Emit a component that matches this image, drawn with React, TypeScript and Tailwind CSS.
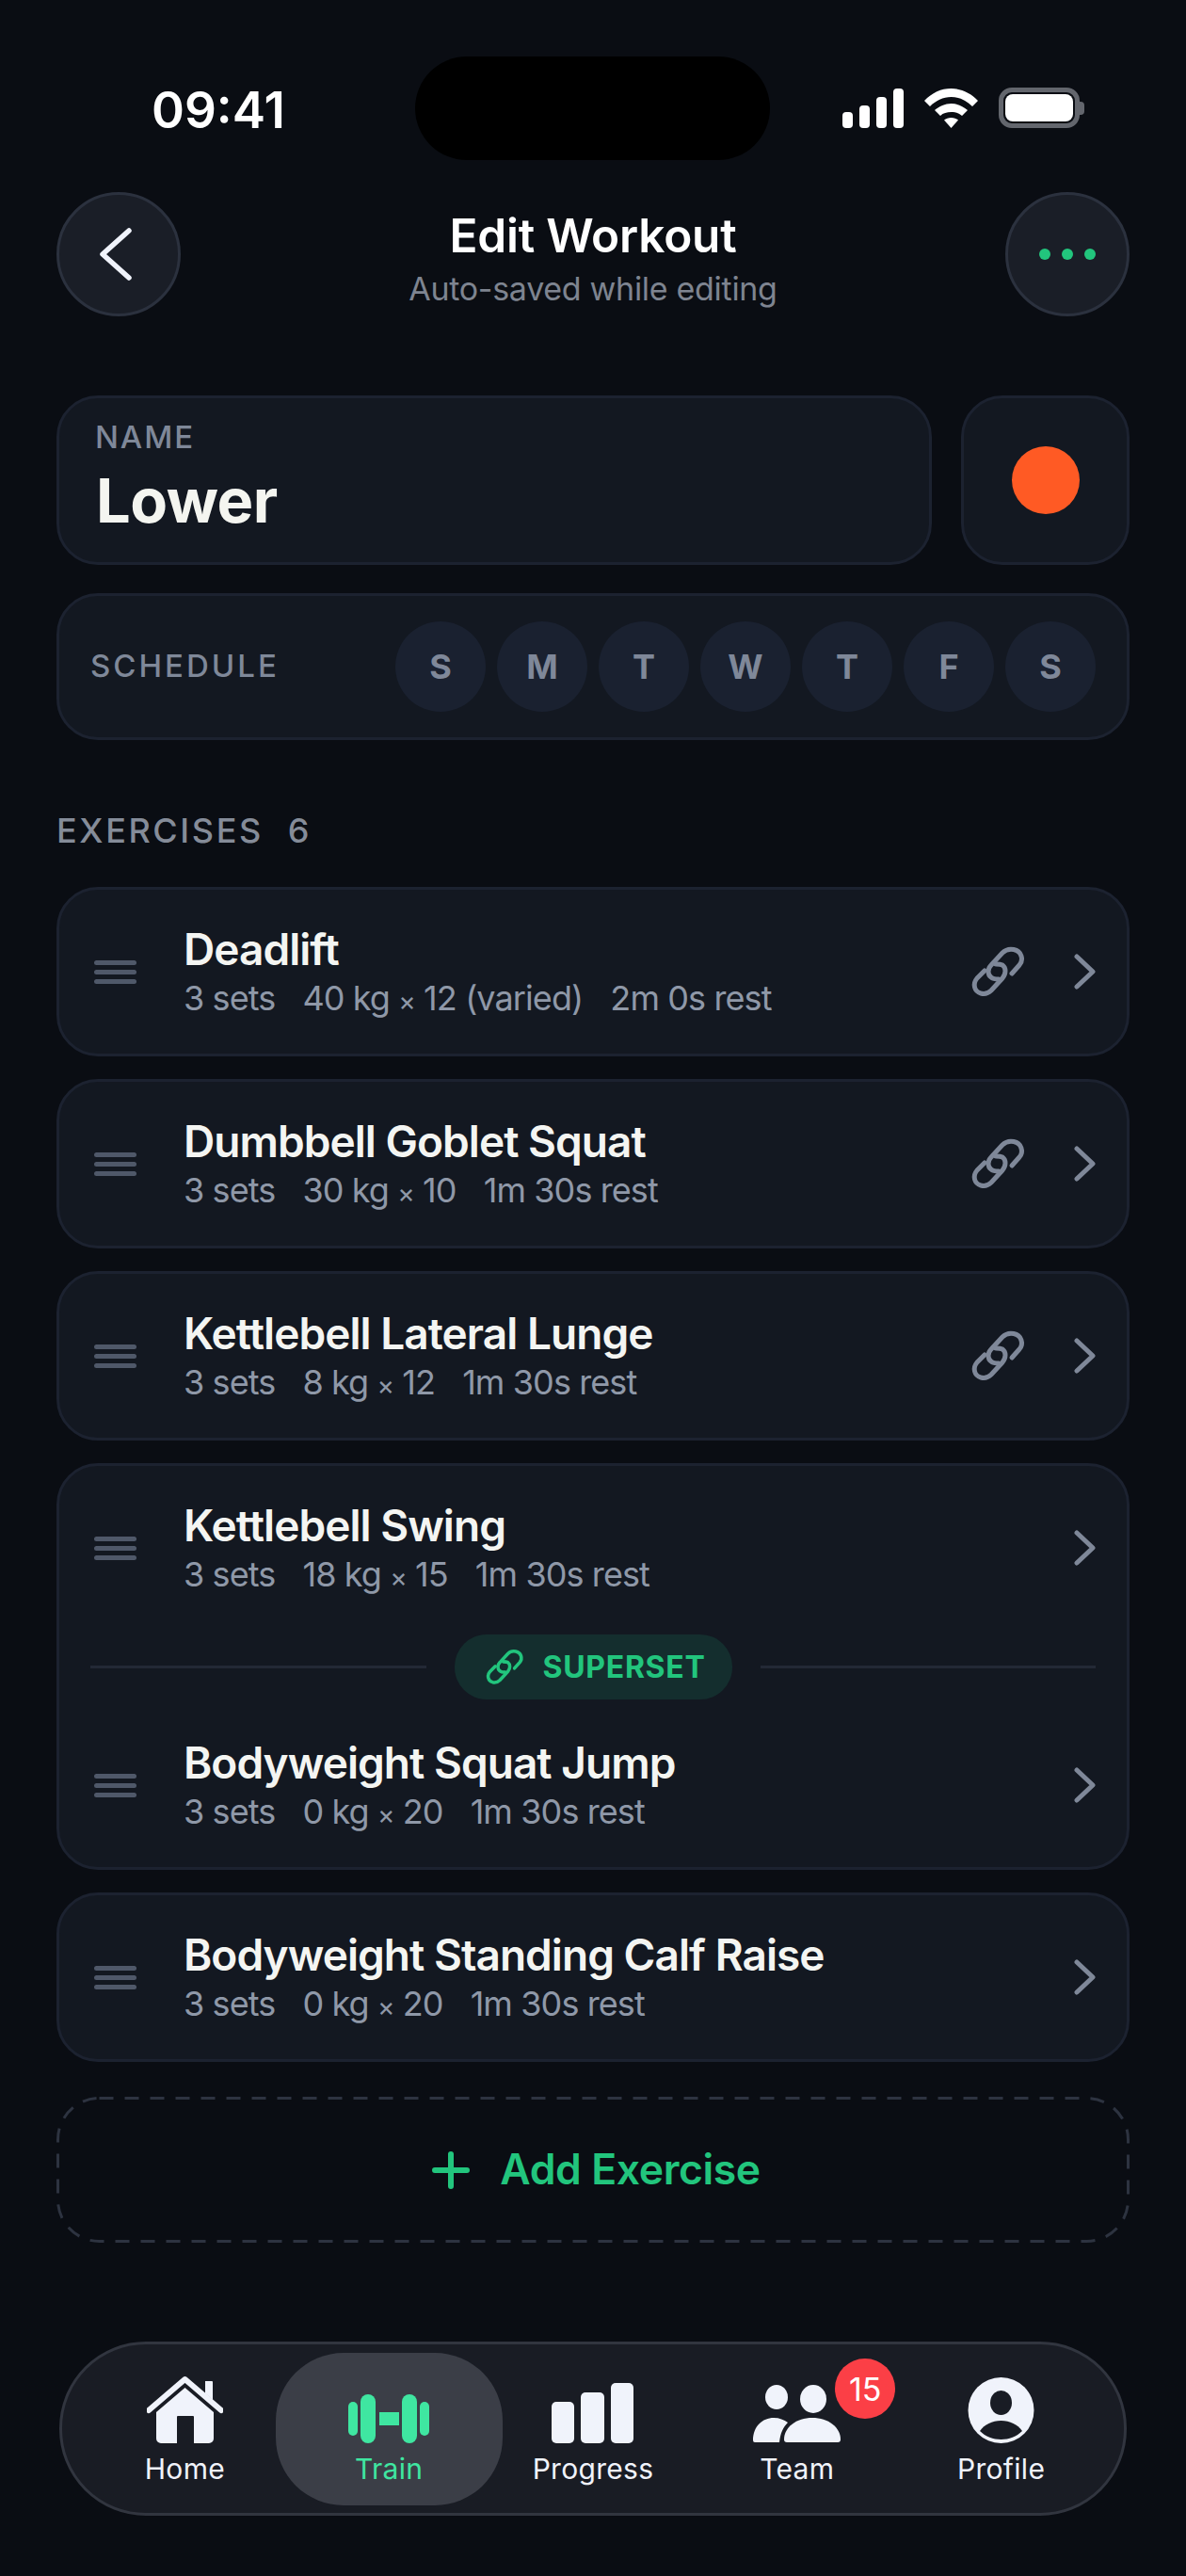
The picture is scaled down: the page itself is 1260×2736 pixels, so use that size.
const sans = "font-['Inter','Liberation_Sans',sans-serif]";

const days = ["S", "M", "T", "W", "T", "F", "S"];

const Chevron = () => (
  <svg viewBox="0 0 23 38" className="h-[38px] w-[23px] text-[#7f8899]" fill="none" stroke="currentColor" strokeWidth="5" strokeLinecap="round" strokeLinejoin="round">
    <path d="M3 3 L20 19 L3 35" />
  </svg>
);

const LinkIcon = ({ className }: { className: string }) => (
  <svg viewBox="0 0 70 64" className={className} fill="none" stroke="currentColor" strokeWidth="5" strokeLinecap="round" strokeLinejoin="round">
    <path d="M50 34 L58 25 C63 19 60 10 52 8.500 C47 7.500 43 9 40 12 L28 25 C24 29 24 35 28 38 C30 40 33 40 36 40" />
    <path d="M21 31 L13 39 C8 45 10 53 17 55 C21 56 25 55 28 52 L40 39 C44 34 44 28 40 25 C38 24 36 24 33 24" />
  </svg>
);

const Load = ({ value }: { value: string }) => {
  const [left, right] = value.split("×");
  return (
    <span>
      {left}
      <span className="text-[28px]">×</span>
      {right}
    </span>
  );
};

const Row = ({ name, sets, load, rest, linked, className = "" }: { name: string; sets: string; load: string; rest: string; linked?: boolean; className?: string }) => (
  <div className={`flex items-center pl-[37px] pr-[33px] ${className}`}>
    <div className="flex w-[45px] flex-col gap-[5px]">
      <div className="h-[5px] rounded-full bg-[#4f5869]" />
      <div className="h-[5px] rounded-full bg-[#4f5869]" />
      <div className="h-[5px] rounded-full bg-[#4f5869]" />
    </div>
    <div className="ml-[50px] flex-1 pt-[2px]">
      <div className="text-[46px] font-semibold leading-[56px] tracking-[-0.95px] text-[#f4f5f2]">{name}</div>
      <div className="mt-[1px] flex gap-[29px] text-[36px] leading-[46px] tracking-[-0.9px] text-[#8f98a8]">
        <span>{sets}</span>
        <Load value={load} />
        <span>{rest}</span>
      </div>
    </div>
    {linked && <LinkIcon className="mr-[46px] h-[64px] w-[70px] text-[#7f8899]" />}
    <Chevron />
  </div>
);

const Card = ({ children }: { children: React.ReactNode }) => (
  <div className="rounded-[44px] border-[3px] border-[#1c2230] bg-[#131821]">{children}</div>
);

const HomeIcon = () => (
  <svg viewBox="0 0 81 72" className="h-[72px] w-[81px]" fill="#f0f3fb">
    <path d="M62 6 h7 a1 1 0 0 1 1 1 v19 l-8 -7 z" />
    <path d="M2 37 L40.5 4 L79 37" fill="none" stroke="#f0f3fb" strokeWidth="6" strokeLinecap="round" strokeLinejoin="round" />
    <path fillRule="evenodd" d="M40.5 13 L71 39 V67 a5 5 0 0 1 -5 5 H15 a5 5 0 0 1 -5 -5 V39 Z M32 44 V72 H50 V44 a1 1 0 0 0 -1 -1 H33 a1 1 0 0 0 -1 1 Z" />
  </svg>
);

const DumbbellIcon = () => (
  <svg viewBox="0 0 86 52" className="h-[52px] w-[86px]" fill="#3fe6a1">
    <rect x="0" y="8" width="10" height="36" rx="5" />
    <rect x="13" y="0" width="16" height="52" rx="8" />
    <rect x="33" y="19" width="21" height="14" />
    <rect x="57" y="0" width="16" height="52" rx="8" />
    <rect x="76" y="8" width="10" height="36" rx="5" />
  </svg>
);

const BarsIcon = () => (
  <svg viewBox="0 0 87 64" className="h-[64px] w-[87px]" fill="#f0f3fb">
    <rect x="0" y="20" width="24" height="44" rx="5" />
    <rect x="31" y="10" width="25" height="54" rx="5" />
    <rect x="63" y="0" width="24" height="64" rx="5" />
  </svg>
);

const TeamIcon = () => (
  <svg viewBox="0 0 93 62" className="h-[62px] w-[93px]" fill="#f0f3fb">
    <ellipse cx="25" cy="13" rx="12" ry="13" />
    <ellipse cx="64" cy="15" rx="14" ry="15" />
    <path d="M0 59 C0 44 10 35 22 35 C28 35 33 37 37 40 C32 45 29 51 28 61 H2 a2 2 0 0 1 -2 -2 Z" />
    <path d="M36 61 a3 3 0 0 1 -3 -3 C33 45 46 35 63 35 C80 35 93 45 93 58 a3 3 0 0 1 -3 3 Z" />
  </svg>
);

const ProfileIcon = () => (
  <svg viewBox="0 0 71 70" className="h-[70px] w-[71px]">
    <circle cx="35.5" cy="35" r="35" fill="#f0f3fb" />
    <ellipse cx="35.5" cy="27" rx="11.5" ry="13" fill="#191c24" />
    <path d="M13 57 C18 50 26 46 35.5 46 C45 46 53 50 58 57 C52 63 44 66 35.5 66 C27 66 19 63 13 57 Z" fill="#191c24" />
  </svg>
);

const NavItem = ({ label, active, children }: { label: string; active?: boolean; children: React.ReactNode }) => (
  <div className="relative flex h-full flex-1 flex-col items-center">
    {active && <div className="absolute -inset-x-3 top-[9px] bottom-[8px] rounded-[72px] bg-[#3b3e47]" />}
    <div className="relative flex h-[110px] items-end pb-[5px]">{children}</div>
    <div className={`relative mt-[3px] text-[30px] font-normal leading-[38px] tracking-[0.3px] ${active ? "text-[#3fe6a1]" : "text-[#f0f3fb]"}`}>{label}</div>
  </div>
);

export default function App() {
  return (
    <div className={`h-[2736px] w-[1260px] overflow-hidden bg-[#0a0d13] ${sans}`}>
      {/* status bar */}
      <div className="mt-[60px] flex h-[110px] items-start pt-[33px]">
        <div className="w-[441px] pl-[161px] text-[53px] font-semibold leading-[48px] text-white">09:41</div>
        <div className="-mt-[33px] h-[110px] w-[377px] rounded-[55px] bg-black" />
        <div className="ml-[77px] flex items-center gap-[22px]">
          <svg viewBox="0 0 65 42" className="h-[42px] w-[65px]" fill="#fff">
            <rect x="0" y="25" width="11" height="17" rx="4" />
            <rect x="18" y="18" width="11" height="24" rx="4" />
            <rect x="36" y="9" width="11" height="33" rx="4" />
            <rect x="54" y="0" width="11" height="42" rx="4" />
          </svg>
          <svg viewBox="0 0 57 42" className="h-[42px] w-[57px]" fill="#fff">
            <path d="M28.5 0 C39 0 49 4.500 57 13 L51 19 C45 13 37 9 28.500 9 C20 9 12 13 6 19 L0 13 C8 4.500 18 0 28.500 0 Z" />
            <path d="M28.5 16 C35 16 41 19 46 23 L40 29 C37 26 33 25 28.5 25 C24 25 20 26 17 29 L11 23 C16 19 22 16 28.5 16 Z" />
            <path d="M28.500 31 C31.500 31 34 32 36 33.500 L28.500 42 L21 33.500 C23 32 25.500 31 28.500 31 Z" />
          </svg>
          <div className="flex items-center">
            <div className="h-[43px] w-[86px] rounded-[14px] border-[5px] border-[#63666d] p-[2px]">
              <div className="h-full rounded-[8px] bg-white" />
            </div>
            <div className="h-[14px] w-[5px] rounded-r-[4px] bg-[#63666d]" />
          </div>
        </div>
      </div>

      {/* header */}
      <div className="mt-[34px] flex h-[132px] items-center justify-between px-[60px]">
        <div className="flex h-[132px] w-[132px] items-center justify-center rounded-full border-[3px] border-[#2b313e] bg-[#1a1e27]">
          <svg viewBox="0 0 34 56" className="-ml-[6px] h-[56px] w-[34px] text-[#f0f3fb]" fill="none" stroke="currentColor" strokeWidth="5.5" strokeLinecap="round" strokeLinejoin="round">
            <path d="M31 3 L3 28 L31 53" />
          </svg>
        </div>
        <div className="pt-[10px] text-center">
          <div className="text-[49.5px] font-semibold leading-[56px] tracking-[-0.2px] text-white">Edit Workout</div>
          <div className="mt-[7px] text-[34px] leading-[44px] tracking-[-0.3px] text-[#7e8490]">Auto-saved while editing</div>
        </div>
        <div className="flex h-[132px] w-[132px] items-center justify-center gap-[12px] rounded-full border-[3px] border-[#2b313e] bg-[#1a1e27]">
          <div className="h-[12px] w-[12px] rounded-full bg-[#22c57d]" />
          <div className="h-[12px] w-[12px] rounded-full bg-[#22c57d]" />
          <div className="h-[12px] w-[12px] rounded-full bg-[#22c57d]" />
        </div>
      </div>

      <div className="mt-[84px] px-[60px]">
        {/* name + colour */}
        <div className="flex gap-[31px]">
          <div className="h-[180px] flex-1 rounded-[44px] border-[3px] border-[#1c2230] bg-[#131821] pl-[38px] pt-[21px]">
            <div className="text-[33px] font-medium leading-[40px] tracking-[1.9px] text-[#7f8899]">NAME</div>
            <div className="ml-[1px] mt-[12px] text-[65px] font-bold leading-[72px] tracking-[-0.5px] text-[#f4f5f0]">Lower</div>
          </div>
          <div className="flex h-[180px] w-[179px] items-center justify-center rounded-[44px] border-[3px] border-[#1c2230] bg-[#131821]">
            <div className="h-[72px] w-[72px] rounded-full bg-[#ff5a24]" />
          </div>
        </div>

        {/* schedule */}
        <div className="mt-[30px] flex h-[156px] items-center justify-between rounded-[44px] border-[3px] border-[#1c2230] bg-[#131821] pl-[33px] pr-[33px]">
          <div className="text-[33px] font-medium tracking-[3px] text-[#7f8899]">SCHEDULE</div>
          <div className="flex gap-[12px]">
            {days.map((d, i) => (
              <div key={i} className="flex h-[96px] w-[96px] items-center justify-center rounded-full bg-[#1a2130] text-[36px] font-bold text-[#7f8899]">
                {d}
              </div>
            ))}
          </div>
        </div>

        {/* exercises */}
        <div className="mt-[76px] flex gap-[26px] text-[36px] font-medium leading-[40px] tracking-[2.6px] text-[#858c99]">
          <span>EXERCISES</span>
          <span>6</span>
        </div>

        <div className="mt-[40px] flex flex-col gap-[24px]">
          <Card><Row className="h-[174px]" name="Deadlift" sets="3 sets" load="40 kg × 12 (varied)" rest="2m 0s rest" linked /></Card>
          <Card><Row className="h-[174px]" name="Dumbbell Goblet Squat" sets="3 sets" load="30 kg × 10" rest="1m 30s rest" linked /></Card>
          <Card><Row className="h-[174px]" name="Kettlebell Lateral Lunge" sets="3 sets" load="8 kg × 12" rest="1m 30s rest" linked /></Card>
          <Card>
            <Row className="h-[174px]" name="Kettlebell Swing" sets="3 sets" load="18 kg × 15" rest="1m 30s rest" />
            <div className="mt-[5px] flex items-center gap-[30px] px-[33px]">
              <div className="h-[3px] flex-1 bg-[#232936]" />
              <div className="flex h-[69px] w-[295px] items-center justify-center gap-[16px] rounded-[34px] bg-[#142e2e]">
                <LinkIcon className="h-[45px] w-[50px] text-[#22c57d]" />
                <span className="text-[32px] font-bold tracking-[0.7px] text-[#22c57d]">SUPERSET</span>
              </div>
              <div className="h-[3px] flex-1 bg-[#232936]" />
            </div>
            <Row className="h-[178px] pt-[4px]" name="Bodyweight Squat Jump" sets="3 sets" load="0 kg × 20" rest="1m 30s rest" />
          </Card>
          <Card><Row className="h-[174px]" name="Bodyweight Standing Calf Raise" sets="3 sets" load="0 kg × 20" rest="1m 30s rest" /></Card>
        </div>

        {/* add */}
        <div className="relative mt-[37px] flex h-[155px] items-center justify-center gap-[32px] pl-[7px] text-[#22c57d]">
          <svg className="absolute inset-0 h-full w-full" fill="none">
            <rect x="1.5" y="1.5" width="1137" height="152" rx="44" stroke="#2d3340" strokeWidth="3" strokeDasharray="15 12" />
          </svg>
          <svg viewBox="0 0 40 40" className="h-[40px] w-[40px]" fill="none" stroke="currentColor" strokeWidth="6" strokeLinecap="round">
            <path d="M20 3 V37 M3 20 H37" />
          </svg>
          <span className="text-[44.5px] font-semibold tracking-[-0.4px]">Add Exercise</span>
        </div>
      </div>

      {/* tab bar */}
      <div className="mx-[63px] mt-[105px] flex h-[185px] rounded-[92px] border-[3px] border-[#31353f] bg-[#191c24] px-[22px]">
        <NavItem label="Home"><HomeIcon /></NavItem>
        <NavItem label="Train" active><DumbbellIcon /></NavItem>
        <NavItem label="Progress"><BarsIcon /></NavItem>
        <NavItem label="Team">
          <TeamIcon />
          <div className="absolute left-[87px] top-[15px] flex h-[64px] w-[64px] items-center justify-center rounded-full bg-[#fb3f46] text-[34px] font-normal text-white">15</div>
        </NavItem>
        <NavItem label="Profile"><ProfileIcon /></NavItem>
      </div>
    </div>
  );
}
